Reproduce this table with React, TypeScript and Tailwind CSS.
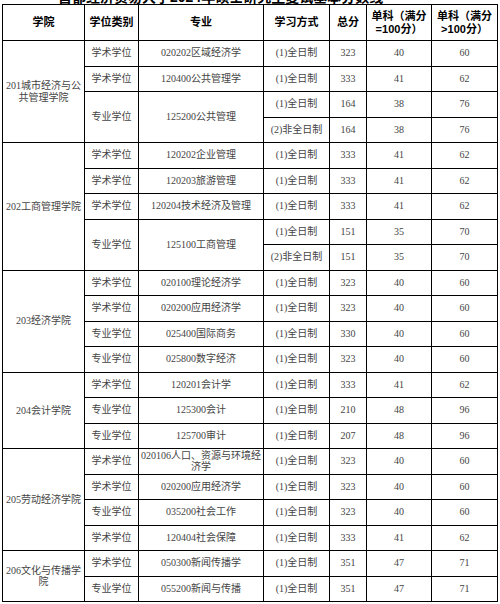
type Row = {
  type?: string;
  major?: React.ReactNode;
  span?: number;
  mode: string;
  total: string;
  a: string;
  b: string;
};

type Group = { college: React.ReactNode; rows: Row[] };

const GROUPS: Group[] = [
  {
    college: (
      <>
        201城市经济与公
        <br />
        共管理学院
      </>
    ),
    rows: [
      { type: "学术学位", major: "020202区域经济学", mode: "(1)全日制", total: "323", a: "40", b: "60" },
      { type: "学术学位", major: "120400公共管理学", mode: "(1)全日制", total: "333", a: "41", b: "62" },
      { type: "专业学位", major: "125200公共管理", span: 2, mode: "(1)全日制", total: "164", a: "38", b: "76" },
      { mode: "(2)非全日制", total: "164", a: "38", b: "76" },
    ],
  },
  {
    college: "202工商管理学院",
    rows: [
      { type: "学术学位", major: "120202企业管理", mode: "(1)全日制", total: "333", a: "41", b: "62" },
      { type: "学术学位", major: "120203旅游管理", mode: "(1)全日制", total: "333", a: "41", b: "62" },
      { type: "学术学位", major: "120204技术经济及管理", mode: "(1)全日制", total: "333", a: "41", b: "62" },
      { type: "专业学位", major: "125100工商管理", span: 2, mode: "(1)全日制", total: "151", a: "35", b: "70" },
      { mode: "(2)非全日制", total: "151", a: "35", b: "70" },
    ],
  },
  {
    college: "203经济学院",
    rows: [
      { type: "学术学位", major: "020100理论经济学", mode: "(1)全日制", total: "323", a: "40", b: "60" },
      { type: "学术学位", major: "020200应用经济学", mode: "(1)全日制", total: "323", a: "40", b: "60" },
      { type: "专业学位", major: "025400国际商务", mode: "(1)全日制", total: "330", a: "40", b: "60" },
      { type: "专业学位", major: "025800数字经济", mode: "(1)全日制", total: "323", a: "40", b: "60" },
    ],
  },
  {
    college: "204会计学院",
    rows: [
      { type: "学术学位", major: "120201会计学", mode: "(1)全日制", total: "333", a: "41", b: "62" },
      { type: "专业学位", major: "125300会计", mode: "(1)全日制", total: "210", a: "48", b: "96" },
      { type: "专业学位", major: "125700审计", mode: "(1)全日制", total: "207", a: "48", b: "96" },
    ],
  },
  {
    college: "205劳动经济学院",
    rows: [
      {
        type: "学术学位",
        major: (
          <span className="block leading-[11px]">
            020106人口、资源与环境经
            <br />
            济学
          </span>
        ),
        mode: "(1)全日制",
        total: "323",
        a: "40",
        b: "60",
      },
      { type: "学术学位", major: "020200应用经济学", mode: "(1)全日制", total: "323", a: "40", b: "60" },
      { type: "专业学位", major: "035200社会工作", mode: "(1)全日制", total: "323", a: "40", b: "60" },
      { type: "学术学位", major: "120404社会保障", mode: "(1)全日制", total: "333", a: "41", b: "62" },
    ],
  },
  {
    college: (
      <>
        206文化与传播学
        <br />
        院
      </>
    ),
    rows: [
      { type: "学术学位", major: "050300新闻传播学", mode: "(1)全日制", total: "351", a: "47", b: "71" },
      { type: "专业学位", major: "055200新闻与传播", mode: "(1)全日制", total: "351", a: "47", b: "71" },
    ],
  },
];

const cell = "border border-black text-center align-middle p-0";
const th = `${cell} font-bold text-black text-[11px] leading-[13px]`;

export default function App() {
  return (
    <div className="w-[500px] h-[604px] bg-white overflow-hidden font-['Liberation_Serif','Noto_Sans_CJK_SC',serif]">
      {/* title line, mostly scrolled off the top */}
      <div className="h-[4px] overflow-hidden flex items-end pl-[58px]">
        <div className="font-['Liberation_Sans','Noto_Sans_CJK_SC',sans-serif] font-bold text-[14px] leading-[14px] text-black whitespace-nowrap">
          首都经济贸易大学2024年硕士研究生复试基本分数线
        </div>
      </div>

      <table className="ml-[2px] w-[495px] table-fixed border-collapse">
        <colgroup>
          <col className="w-[82px]" />
          <col className="w-[54px]" />
          <col className="w-[125px]" />
          <col className="w-[66px]" />
          <col className="w-[37px]" />
          <col className="w-[65px]" />
          <col className="w-[66px]" />
        </colgroup>
        <thead className="font-['Liberation_Sans','Noto_Sans_CJK_SC',sans-serif]">
          <tr className="h-[36px]">
            <th className={th}>学院</th>
            <th className={th}>学位类别</th>
            <th className={th}>专业</th>
            <th className={th}>学习方式</th>
            <th className={th}>总分</th>
            <th className={th}>
              单科（满分
              <br />
              =100分）
            </th>
            <th className={th}>
              单科（满分
              <br />
              &gt;100分）
            </th>
          </tr>
        </thead>
        <tbody className="text-[10px] leading-[12px] text-[#444]">
          {GROUPS.map((g, gi) =>
            g.rows.map((r, ri) => (
              <tr key={`${gi}-${ri}`} className="h-[25.5px]">
                {ri === 0 && (
                  <td rowSpan={g.rows.length} className={`${cell} leading-[11.5px]`}>
                    {g.college}
                  </td>
                )}
                {r.type && (
                  <td rowSpan={r.span ?? 1} className={cell}>
                    {r.type}
                  </td>
                )}
                {r.major && (
                  <td rowSpan={r.span ?? 1} className={`${cell} whitespace-nowrap`}>
                    {r.major}
                  </td>
                )}
                <td className={cell}>{r.mode}</td>
                <td className={cell}>{r.total}</td>
                <td className={cell}>{r.a}</td>
                <td className={cell}>{r.b}</td>
              </tr>
            ))
          )}
        </tbody>
      </table>
    </div>
  );
}
